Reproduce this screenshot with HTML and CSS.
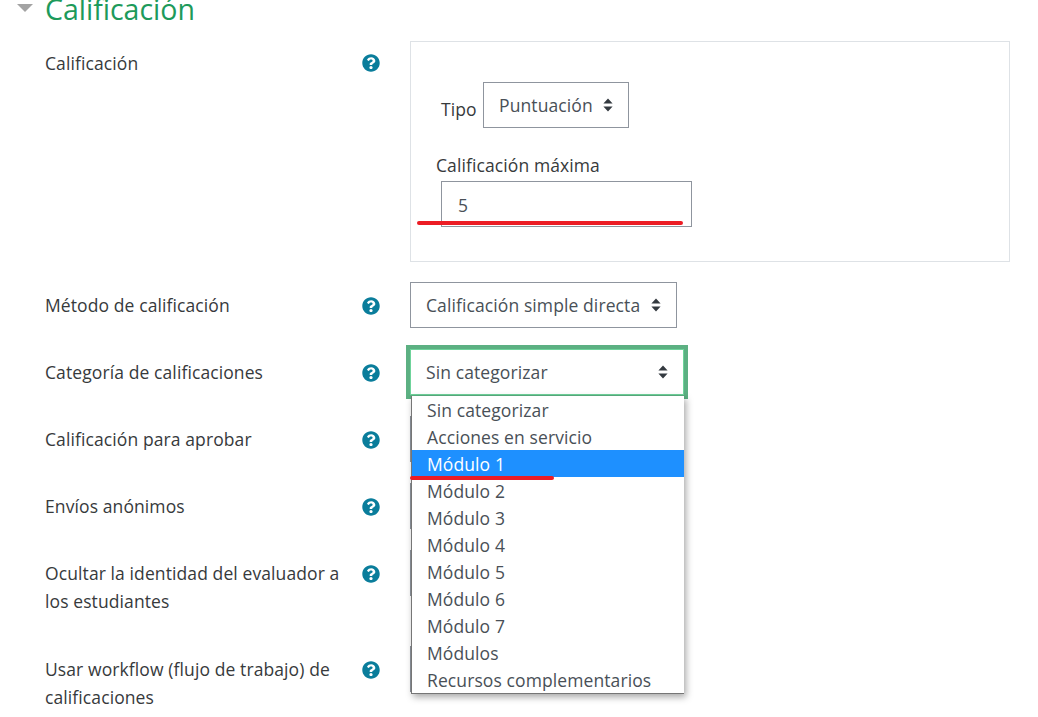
FILE: index.html
```html
<!DOCTYPE html>
<html lang="es">
<head>
<meta charset="utf-8">
<title>Calificación</title>
<link rel="stylesheet" href="styles.css">
</head>
<body>
<svg class="defs" width="0" height="0" aria-hidden="true">
  <symbol id="help" viewBox="0 0 512 512"><path d="M504 256c0 136.997-111.043 248-248 248S8 392.997 8 256C8 119.083 119.043 8 256 8s248 111.083 248 248zM262.655 90c-54.497 0-89.255 22.957-116.549 63.758-3.536 5.286-2.353 12.415 2.715 16.258l34.699 26.31c5.205 3.947 12.621 3.008 16.665-2.122 17.864-22.658 30.113-35.797 57.303-35.797 20.429 0 45.698 13.148 45.698 32.958 0 14.976-12.363 22.667-32.534 33.976C247.128 238.528 216 254.941 216 296v4c0 6.627 5.373 12 12 12h56c6.627 0 12-5.373 12-12v-1.333c0-28.462 83.186-29.647 83.186-106.667 0-58.002-60.165-102-116.531-102zM256 338c-25.365 0-46 20.635-46 46 0 25.364 20.635 46 46 46s46-20.636 46-46c0-25.365-20.635-46-46-46z"/></symbol>
  <symbol id="updown" viewBox="0 0 10 14"><path d="M5 0.5 9.6 5.6H0.4zM5 13.5 0.4 8.4H9.6z"/></symbol>
</svg>
<main class="page">
  <header class="section-head">
    <span class="caret"></span>
    <h2 class="section-title">Calificación</h2>
  </header>

  <section class="row row-grade">
    <div class="label">Calificación</div>
    <svg class="help"><use href="#help"/></svg>
    <div class="grade-box">
      <div class="type-line">
        <span class="type-label">Tipo</span>
        <div class="select select-type"><span>Puntuación</span><svg class="arrows"><use href="#updown"/></svg></div>
      </div>
      <div class="max-label">Calificación máxima</div>
      <div class="input-wrap">
        <div class="input">5</div>
        <span class="mark mark-input"></span>
      </div>
    </div>
  </section>

  <section class="row">
    <div class="label">Método de calificación</div>
    <svg class="help"><use href="#help"/></svg>
    <div class="select select-method"><span>Calificación simple directa</span><svg class="arrows"><use href="#updown"/></svg></div>
  </section>

  <section class="row">
    <div class="label">Categoría de calificaciones</div>
    <svg class="help"><use href="#help"/></svg>
    <div class="category">
      <div class="select select-focus"><span>Sin categorizar</span><svg class="arrows"><use href="#updown"/></svg></div>
      <ul class="menu">
        <li>Sin categorizar</li>
        <li>Acciones en servicio</li>
        <li class="active">Módulo 1</li>
        <li>Módulo 2</li>
        <li>Módulo 3</li>
        <li>Módulo 4</li>
        <li>Módulo 5</li>
        <li>Módulo 6</li>
        <li>Módulo 7</li>
        <li>Módulos</li>
        <li>Recursos complementarios</li>
      </ul>
      <span class="mark mark-menu"></span>
    </div>
  </section>

  <section class="row">
    <div class="label">Calificación para aprobar</div>
    <svg class="help"><use href="#help"/></svg>
    <div class="select select-under"></div>
  </section>

  <section class="row">
    <div class="label">Envíos anónimos</div>
    <svg class="help"><use href="#help"/></svg>
    <div class="select select-under"></div>
  </section>

  <section class="row row-tall">
    <div class="label">Ocultar la identidad del evaluador a los estudiantes</div>
    <svg class="help"><use href="#help"/></svg>
    <div class="select select-under"></div>
  </section>

  <section class="row">
    <div class="label">Usar workflow (flujo de trabajo) de calificaciones</div>
    <svg class="help"><use href="#help"/></svg>
    <div class="select select-under"></div>
  </section>
</main>
</body>
</html>
```

FILE: styles.css
```css
* { box-sizing: border-box; }

html, body {
  margin: 0;
  height: 717px;
  overflow: hidden;
  background: #fff;
}

body {
  font-family: "Open Sans", "Noto Sans", sans-serif;
  font-size: 17.5px;
  letter-spacing: 0.1px;
  line-height: 28px;
  color: #373a3c;
}

.defs { position: absolute; }

.page { padding-left: 45px; }

.section-head {
  position: relative;
  height: 41px;
}

.caret {
  position: absolute;
  left: -28px;
  top: 4px;
  border-left: 8px solid transparent;
  border-right: 8px solid transparent;
  border-top: 8px solid #a3a3a3;
}

.section-title {
  margin: 0;
  position: relative;
  top: -9px;
  font-size: 28.5px;
  letter-spacing: 0;
  line-height: 36px;
  font-weight: 400;
  color: #1d9a5b;
}

.row {
  display: grid;
  grid-template-columns: 317px 48px 1fr;
  align-items: start;
  margin-bottom: 21px;
  min-height: 46px;
}

.row-grade { margin-bottom: 20px; }

.label {
  padding-top: 9px;
  padding-right: 10px;
}

.row-grade .label { padding-top: 8px; }

.help {
  width: 18px;
  height: 18px;
  margin-top: 15px;
  fill: #0a7d9b;
}

.row-grade .help { margin-top: 13px; }

.grade-box {
  width: 600px;
  height: 221px;
  border: 1px solid #dee2e6;
  padding: 40px 0 0 30px;
}

.type-line { display: flex; }

.type-label {
  margin-top: 13px;
  margin-right: 5px;
  width: 37px;
}

.select {
  display: inline-flex;
  align-items: center;
  justify-content: space-between;
  height: 46px;
  padding: 0 15px;
  border: 1px solid #8f959e;
  color: #495057;
  background: #fff;
}

.arrows {
  width: 10px;
  height: 14px;
  margin-left: 10px;
  fill: #343a40;
  flex: none;
}

.select-type { width: 146px; }
.select-method { width: 267px; justify-self: start; }

.max-label {
  margin-top: 23px;
  margin-left: -5px;
}

.input-wrap {
  position: relative;
  width: 251px;
  margin-top: 2px;
}

.input {
  height: 46px;
  padding: 9px 16px;
  border: 1px solid #8f959e;
  color: #495057;
}

.mark {
  position: absolute;
  height: 4px;
  border-radius: 2px;
  background: #ec1c24;
}

.mark-input {
  left: -24px;
  width: 266px;
  top: 40px;
}

.category {
  position: relative;
  width: 274px;
}

.select-focus {
  display: flex;
  width: 274px;
  border: 1px solid #6fd39b;
  outline: 4px solid #5cb082;
}

.menu {
  position: absolute;
  z-index: 2;
  top: 47px;
  left: 1px;
  width: 273px;
  margin: 0;
  padding: 0;
  list-style: none;
  background: #fff;
  color: #495057;
  border-bottom: 1px solid #767676;
  border-left: 1px solid #767676;
  box-shadow: 2px 3px 7px rgba(0, 0, 0, .35);
}

.menu li {
  height: 27px;
  line-height: 28px;
  padding-left: 15px;
}

.menu .active {
  background: #1e90ff;
  color: #fff;
}

.mark-menu {
  z-index: 3;
  left: 0;
  width: 144px;
  top: 127px;
}

.select-under { width: 100px; }

.row-tall { margin-bottom: 31px; }
```
